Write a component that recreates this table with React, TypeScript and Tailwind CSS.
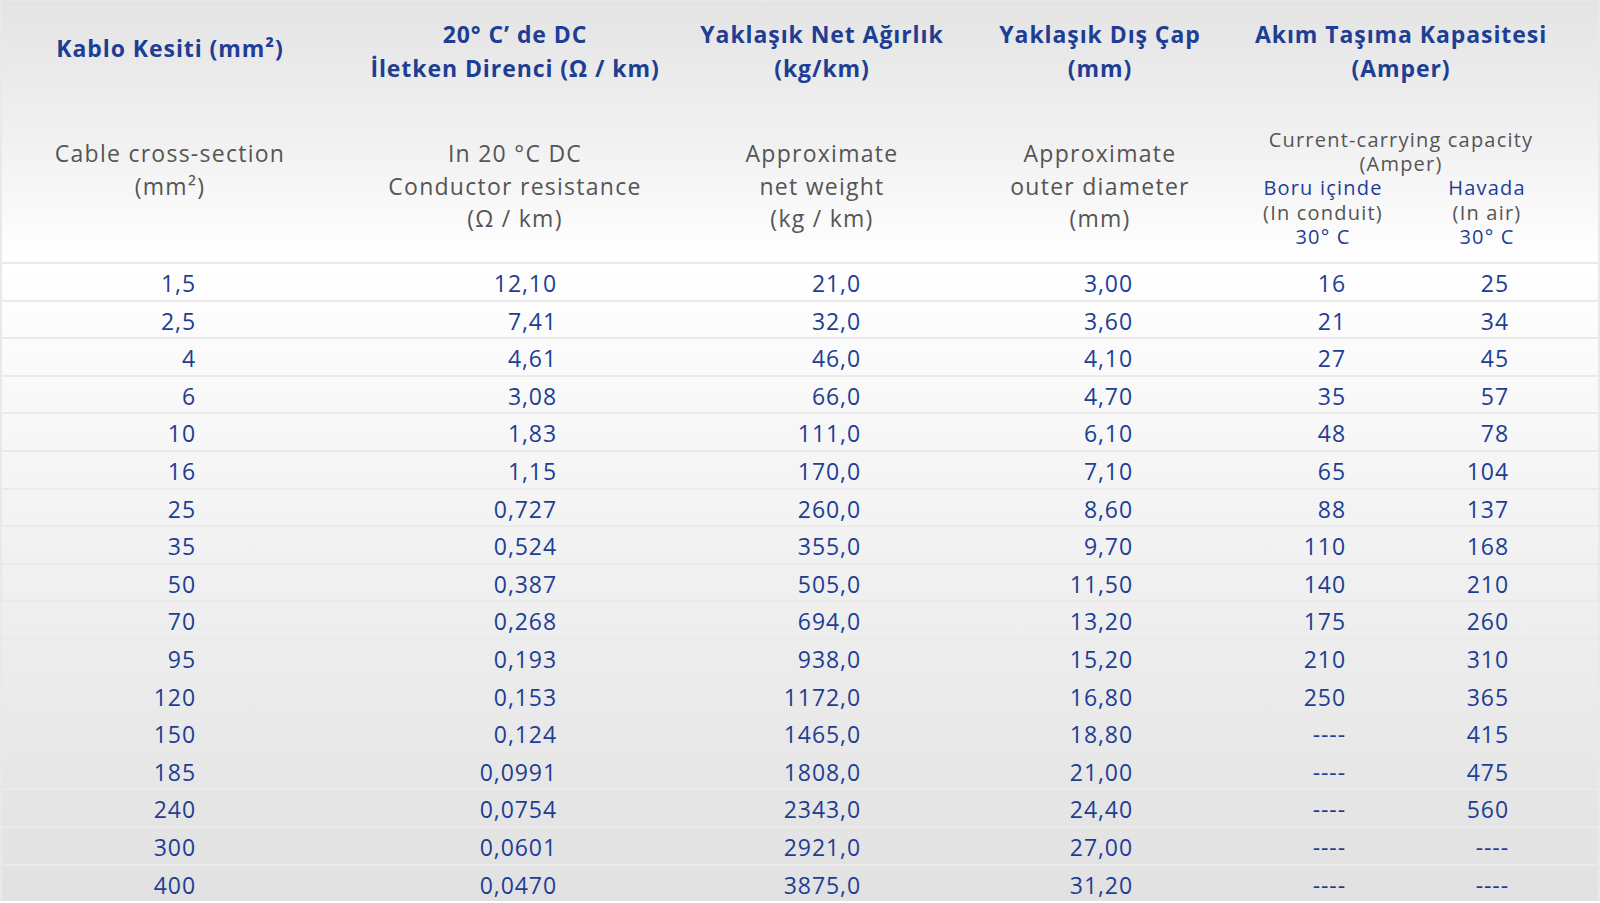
const rows = [
  ['1,5', '12,10', '21,0', '3,00', '16', '25'],
  ['2,5', '7,41', '32,0', '3,60', '21', '34'],
  ['4', '4,61', '46,0', '4,10', '27', '45'],
  ['6', '3,08', '66,0', '4,70', '35', '57'],
  ['10', '1,83', '111,0', '6,10', '48', '78'],
  ['16', '1,15', '170,0', '7,10', '65', '104'],
  ['25', '0,727', '260,0', '8,60', '88', '137'],
  ['35', '0,524', '355,0', '9,70', '110', '168'],
  ['50', '0,387', '505,0', '11,50', '140', '210'],
  ['70', '0,268', '694,0', '13,20', '175', '260'],
  ['95', '0,193', '938,0', '15,20', '210', '310'],
  ['120', '0,153', '1172,0', '16,80', '250', '365'],
  ['150', '0,124', '1465,0', '18,80', '----', '415'],
  ['185', '0,0991', '1808,0', '21,00', '----', '475'],
  ['240', '0,0754', '2343,0', '24,40', '----', '560'],
  ['300', '0,0601', '2921,0', '27,00', '----', '----'],
  ['400', '0,0470', '3875,0', '31,20', '----', '----'],
]

// right padding per column so the numbers line up like the source table
const cellPad = ['pr-[142px]', 'pr-[135px]', 'pr-[91px]', 'pr-[115px]', 'pr-[52px]', 'pr-[89px]']

function Heading({ children, single }: { children: React.ReactNode; single?: boolean }) {
  return (
    <div
      className={`h-[68px] flex items-center justify-center text-center text-[23px] leading-[34px] tracking-[0.04em] font-bold text-[#1d3e94] whitespace-nowrap ${single ? 'pb-[6px]' : ''}`}
    >
      <div>{children}</div>
    </div>
  )
}

function Sub({ children }: { children: React.ReactNode }) {
  return (
    <div className="mt-[52px] text-center text-[23px] leading-[32.5px] tracking-[0.055em] text-[#555] whitespace-nowrap">
      {children}
    </div>
  )
}

export default function App() {
  return (
    <div className="w-[1600px] h-[903px] overflow-hidden bg-white font-['Open_Sans',sans-serif]">
      <div className="border-x-2 border-t border-[#e9e9e9]">
        {/* header */}
        <div className="h-[261px] pt-[16px] bg-gradient-to-b from-[#e4e4e4] via-[#f0f0f0] to-white grid grid-cols-[336px_354px_260px_296px_1fr]">
          <div>
            <Heading single>Kablo Kesiti (mm²)</Heading>
            <Sub>
              Cable cross-section
              <br />
              (mm²)
            </Sub>
          </div>
          <div>
            <Heading>
              20° C’ de DC
              <br />
              İletken Direnci (Ω / km)
            </Heading>
            <Sub>
              In 20 °C DC
              <br />
              Conductor resistance
              <br />
              (Ω / km)
            </Sub>
          </div>
          <div>
            <Heading>
              Yaklaşık Net Ağırlık
              <br />
              (kg/km)
            </Heading>
            <Sub>
              Approximate
              <br />
              net weight
              <br />
              (kg / km)
            </Sub>
          </div>
          <div>
            <Heading>
              Yaklaşık Dış Çap
              <br />
              (mm)
            </Heading>
            <Sub>
              Approximate
              <br />
              outer diameter
              <br />
              (mm)
            </Sub>
          </div>
          <div className="pr-[44px]">
            <Heading>
              Akım Taşıma Kapasitesi
              <br />
              (Amper)
            </Heading>
            <div className="mt-[43px] text-center text-[20px] tracking-[0.06em] text-[#555] whitespace-nowrap">
              <div className="h-[23.5px] leading-[23.5px]">Current-carrying capacity</div>
              <div className="h-[23.5px] leading-[23.5px]">(Amper)</div>
            </div>
            <div className="mt-[1px] grid grid-cols-[150px_1fr] text-center text-[20px] leading-[24.5px] tracking-[0.06em] whitespace-nowrap">
              <div>
                <div className="text-[#1d3e94]">Boru içinde</div>
                <div className="text-[#555]">(In conduit)</div>
                <div className="text-[#1d3e94]">30° C</div>
              </div>
              <div className="pl-[22px]">
                <div className="text-[#1d3e94]">Havada</div>
                <div className="text-[#555]">(In air)</div>
                <div className="text-[#1d3e94]">30° C</div>
              </div>
            </div>
          </div>
        </div>

        {/* body */}
        <div className="bg-gradient-to-b from-white to-[#e1e1e1]">
          {rows.map((r, i) => (
            <div
              key={i}
              className="h-[37.6px] border-t-2 border-[#eaeaea] grid grid-cols-[336px_354px_260px_296px_150px_1fr] items-center pt-[2px] text-[23px] tracking-[0.04em] text-[#1d3e94]"
            >
              {r.map((v, j) => (
                <div key={j} className={`text-right ${cellPad[j]}`}>
                  {v}
                </div>
              ))}
            </div>
          ))}
        </div>
      </div>
    </div>
  )
}
